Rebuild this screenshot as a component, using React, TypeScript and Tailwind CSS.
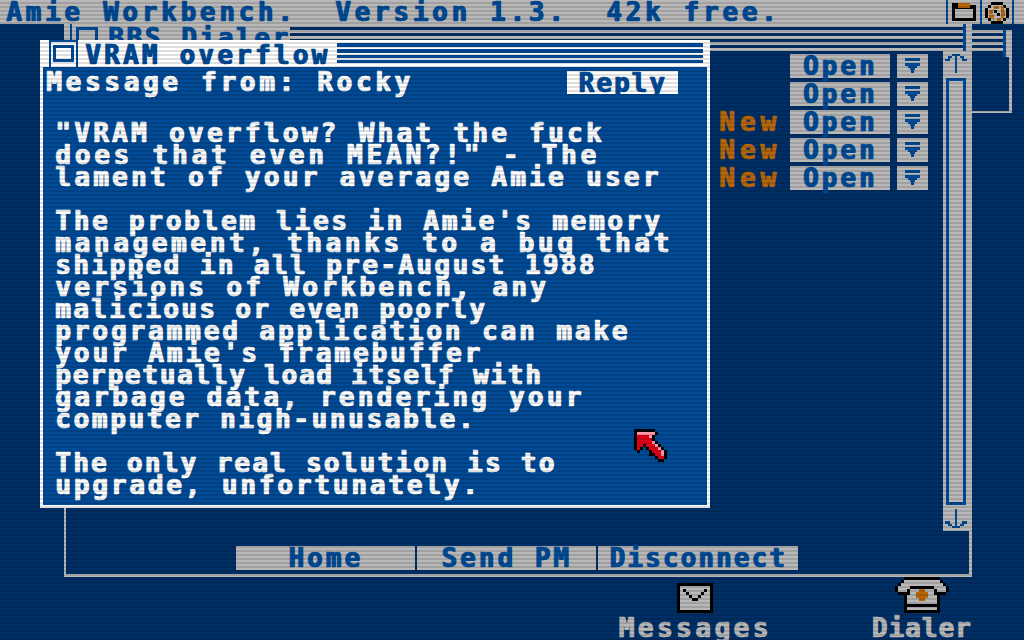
import React from "react";

const FONT =
  "font-['DejaVu_Sans_Mono',monospace] font-bold text-[26px] leading-[22px] whitespace-pre [-webkit-text-stroke:0.5px_currentColor] [text-shadow:1px_0_0_currentColor]";

const CURSOR = [
  "KKKKKKK....",
  "KPPPPPPK...",
  "KRRRRPK....",
  "KRRRRRK....",
  "KRRRRRPK...",
  "KRRKRRRPK..",
  "KRK.KRRRPK.",
  ".K...KRRRPK",
  ".....KKRRPK",
  ".......KRRK",
  "........KK.",
];
const CURSOR_FILL: Record<string, string> = { K: "#000", R: "#e00018", P: "#ff9aa8" };

function Arrow() {
  return (
    <svg width="15" height="16" viewBox="0 0 15 16" shapeRendering="crispEdges">
      <path d="M0 0h15v3H0zM0 5h15v3h-3v2h-2v2H9v3H6v-3H5v-2H3V8H0z" fill="#004a96" />
    </svg>
  );
}

function OpenRow({ isNew }: { isNew?: boolean }) {
  return (
    <div className="flex h-[24px] items-center justify-end">
      {isNew && <span className={`${FONT} mr-[9px] tracking-[5px] text-[#b8660a]`}>New</span>}
      <div className="flex h-full w-[100px] items-center justify-center bg-[#b8b8b8]">
        <span className={`${FONT} tracking-[3px] text-[#004a96]`}>Open</span>
      </div>
      <div className="ml-[7px] flex h-full w-[31px] items-center justify-center bg-[#b8b8b8]">
        <Arrow />
      </div>
    </div>
  );
}

function Body({ t, c }: { t: string; c: string }) {
  return <div className={`${FONT} ${c} text-white`}>{t}</div>;
}

function NavyLines({ n }: { n: number }) {
  return (
    <div className="flex flex-col gap-[3px]">
      {Array.from({ length: n }).map((_, i) => (
        <div key={i} className="h-[3px] bg-[#002f66]" />
      ))}
    </div>
  );
}

export default function App() {
  return (
    <div className="relative h-[640px] w-[1024px] overflow-hidden bg-[#002f66]">
      {/* far window */}
      <div className="absolute left-[972px] top-[30px] flex h-[83px] w-[40px] flex-col border-b-[2px] border-r-[3px] border-[#b8b8b8]">
        <div className="flex h-[27px] items-start">
          <div className="h-[21px] w-[31px] bg-[#b8b8b8] pt-[3px]">
            <NavyLines n={3} />
          </div>
          <div className="h-[27px] w-[3px] bg-[#004a96]" />
          <div className="h-[27px] w-[3px] bg-[#b8b8b8]" />
        </div>
      </div>

      {/* BBS dialer window */}
      <div className="absolute left-[64px] top-[24px] flex h-[553px] w-[908px] flex-col border-b-[3px] border-l-[2px] border-r-[3px] border-[#b8b8b8]">
        <div className="flex h-[27px] items-stretch bg-[#b8b8b8]">
          <div className="ml-[4px] w-[2px] bg-[#004a96]" />
          <div className="ml-[4px] mt-[3px] h-[24px] w-[22px] border-[3px] border-[#004a96]" />
          <div className="ml-[10px] w-[182px] pt-[3px]">
            <span className={`${FONT} tracking-[2.6px] text-[#004a96]`}>BBS Dialer</span>
          </div>
          <div className="flex-1 pt-[3px]">
            <NavyLines n={4} />
          </div>
          <div className="w-[3px] bg-[#004a96]" />
          <div className="w-[3px]" />
        </div>
        <div className="flex flex-1">
          <div className="flex flex-1 flex-col">
            <div className="flex flex-col gap-[4px] pr-[15px] pt-[3px]">
              <OpenRow />
              <OpenRow />
              <OpenRow isNew />
              <OpenRow isNew />
              <OpenRow isNew />
            </div>
            <div className="mb-[4px] ml-[170px] mt-auto flex h-[24px] gap-[2px]">
              <div className="flex w-[179px] items-center justify-center bg-[#b8b8b8]">
                <span className={`${FONT} tracking-[3px] text-[#004a96]`}>Home</span>
              </div>
              <div className="flex w-[179px] items-center justify-center bg-[#b8b8b8]">
                <span className={`${FONT} tracking-[3px] text-[#004a96]`}>Send PM</span>
              </div>
              <div className="flex w-[200px] items-center justify-center bg-[#b8b8b8]">
                <span className={`${FONT} tracking-[2.1px] text-[#004a96]`}>Disconnect</span>
              </div>
            </div>
          </div>
          <div className="flex h-[480px] w-[26px] flex-col bg-[#b8b8b8]">
            <div className="flex h-[27px] justify-center pt-[3px]">
              <svg width="22" height="19" viewBox="0 0 22 19" shapeRendering="crispEdges">
                <path d="M7 0h8v2h-3v17h-2V2H7zM3 2h4v2H5v3H0V5h3zM15 2h4v3h3v2h-5V4h-2z" fill="#004a96" />
              </svg>
            </div>
            <div className="ml-[3px] w-[20px] flex-1 border-[3px] border-[#004a96]" />
            <div className="flex h-[26px] justify-center pt-[4px]">
              <svg width="22" height="19" viewBox="0 0 22 19" shapeRendering="crispEdges">
                <path d="M10 0h2v17h3v2H7v-2h3zM0 12h5v3h2v2H3v-2H0zM17 12h5v3h-3v2h-4v-2h2z" fill="#004a96" />
              </svg>
            </div>
          </div>
        </div>
      </div>

      {/* top bar */}
      <div className="absolute left-0 top-0 flex h-[24px] w-[1024px] items-center bg-[#b8b8b8] pl-[6px]">
        <span className={`${FONT} tracking-[3.7px] text-[#004a96]`}>Amie Workbench.  Version 1.3.  42k free.</span>
        <div className="absolute bottom-0 left-[946px] top-0 w-[2px] bg-[#004a96]" />
        <div className="absolute bottom-0 left-[980px] top-0 w-[2px] bg-[#004a96]" />
        <div className="absolute bottom-0 left-[1012px] top-0 w-[2px] bg-[#004a96]" />
        <svg className="absolute left-[952px] top-[3px]" width="24" height="18" viewBox="0 0 24 18" shapeRendering="crispEdges">
          <path d="M0 0h18v2h6v16H0zM3 6v9h18V6z" fill="#000" />
          <path d="M6 0h12v5H6z" fill="#b8660a" />
        </svg>
        <svg className="absolute left-[985px] top-[2px]" width="24" height="22" viewBox="0 0 24 22" shapeRendering="crispEdges">
          <path d="M6 0h12v3h3v3h3v10h-3v3h-3v3H6v-3H3v-3H0V6h3V3h3z" fill="#000" />
          <path d="M6 3h12v3h3v10h-3v3H6v-3H3V6h3z" fill="#b8b8b8" />
          <path d="M4 8h5V4h5v3H8v5H4zM16 4h3v5h1v3h-4zM4 13h5v5H8v-2H4zM16 11h4v3h-1v2h-3v3h-4v-3h4z" fill="#b8660a" />
          <path d="M9 8h3v3h3v3h-3v-3H9z" fill="#000" />
        </svg>
      </div>

      {/* message window */}
      <div className="absolute left-[40px] top-[40px] flex h-[468px] w-[670px] flex-col border-b-[3px] border-l-[3px] border-r-[3px] border-white bg-[#004a96]">
        <div className="flex h-[27px] shrink-0 items-stretch bg-white">
          <div className="ml-[6px] w-[29px] border-x-[2px] border-t-[2px] border-[#004a96] px-[2px] pb-[5px] pt-[3px]">
            <div className="h-full w-full border-[3px] border-[#004a96]" />
          </div>
          <div className="ml-[7px] w-[252px] pt-[4px]">
            <span className={`${FONT} tracking-[3.2px] text-[#004a96]`}>VRAM overflow</span>
          </div>
          <div className="flex flex-1 flex-col gap-[2px] pt-[3px]">
            <div className="h-[4px] bg-[#004a96]" />
            <div className="h-[4px] bg-[#004a96]" />
            <div className="h-[3px] bg-[#004a96]" />
            <div className="h-[3px] bg-[#004a96]" />
          </div>
          <div className="w-[4px]" />
        </div>
        <div className="flex flex-col">
          <div className="relative h-[28px] pl-[3px] pt-[4px]">
            <span className={`${FONT} tracking-[3.7px] text-white`}>Message from: Rocky</span>
            <div className="absolute left-[524px] top-[4px] flex h-[23px] w-[111px] items-center justify-center bg-white">
              <span className={`${FONT} tracking-[2px] text-[#004a96]`}>Reply</span>
            </div>
          </div>
          <div className="flex flex-col pl-[12px] pt-[27px]">
            <Body t={'"VRAM overflow? What the fuck'} c="tracking-[3.3px]" />
            <Body t={'does that even MEAN?!" - The'} c="tracking-[3.8px]" />
            <Body t="lament of your average Amie user" c="tracking-[3.3px]" />
            <div className="h-[22px]" />
            <Body t="The problem lies in Amie's memory" c="tracking-[2.75px]" />
            <Body t="management, thanks to a bug that" c="tracking-[3.65px]" />
            <Body t="shipped in all pre-August 1988" c="tracking-[2.4px]" />
            <Body t="versions of Workbench, any" c="tracking-[3.35px]" />
            <Body t="malicious or even poorly" c="tracking-[2.35px]" />
            <Body t="programmed application can make" c="tracking-[2.9px]" />
            <Body t="your Amie's framebuffer" c="tracking-[2.95px]" />
            <Body t="perpetually load itself with" c="tracking-[1.75px]" />
            <Body t="garbage data, rendering your" c="tracking-[3.25px]" />
            <Body t="computer nigh-unusable." c="tracking-[2.65px]" />
            <div className="h-[22px]" />
            <Body t="The only real solution is to" c="tracking-[2.25px]" />
            <Body t="upgrade, unfortunately." c="tracking-[2.85px]" />
          </div>
        </div>
      </div>

      {/* desktop icons */}
      <div className="absolute left-[619px] top-[583px] flex w-[152px] flex-col items-center">
        <svg width="36" height="30" viewBox="0 0 36 30" shapeRendering="crispEdges">
          <path d="M0 0h36v30H0z" fill="#000" />
          <path d="M3 3h30v24H3z" fill="#b8b8b8" />
          <path d="M6 6h3v3h3v3h3v3h6v-3h3V9h3V6h3v3h-3v3h-3v3h-3v3h-6v-3h-3v-3H9V9H6z" fill="#000" />
        </svg>
        <span className={`${FONT} mt-[4px] tracking-[3.5px] text-[#b8b8b8]`}>Messages</span>
      </div>
      <div className="absolute left-[873px] top-[577px] flex w-[97px] flex-col items-center">
        <svg width="54" height="36" viewBox="0 0 54 36" shapeRendering="crispEdges">
          <path d="M9 0h36v3h3v3h3v3h3v6h-3v3h-6v18H9V18H3v-3H0V9h3V6h3V3h3z" fill="#000" />
          <path d="M9 3h36v3h3v3h3v6h-9v-3h-3V9H15v3h-3v3H3V9h3V6h3z" fill="#b8b8b8" />
          <path d="M15 12h24v6h3v9H12v-9h3zM12 30h30v3H12z" fill="#b8b8b8" />
          <path d="M24 12h6v3h3v6h-3v3h-6v-3h-3v-6h3z" fill="#b8660a" />
        </svg>
        <span className={`${FONT} mt-[4px] tracking-[1px] text-[#b8b8b8]`}>Dialer</span>
      </div>

      {/* pointer */}
      <svg className="absolute left-[634px] top-[429px]" width="33" height="33" viewBox="0 0 11 11" shapeRendering="crispEdges">
        {CURSOR.flatMap((row, y) =>
          row.split("").map((ch, x) =>
            ch === "." ? null : <rect key={`${x}-${y}`} x={x} y={y} width="1" height="1" fill={CURSOR_FILL[ch]} />
          )
        )}
      </svg>

      {/* scanlines */}
      <div className="pointer-events-none absolute inset-0 bg-[repeating-linear-gradient(to_bottom,rgba(0,0,0,0)_0px,rgba(0,0,0,0)_2px,rgba(0,0,0,0.13)_2px,rgba(0,0,0,0.13)_4px)]" />
    </div>
  );
}
